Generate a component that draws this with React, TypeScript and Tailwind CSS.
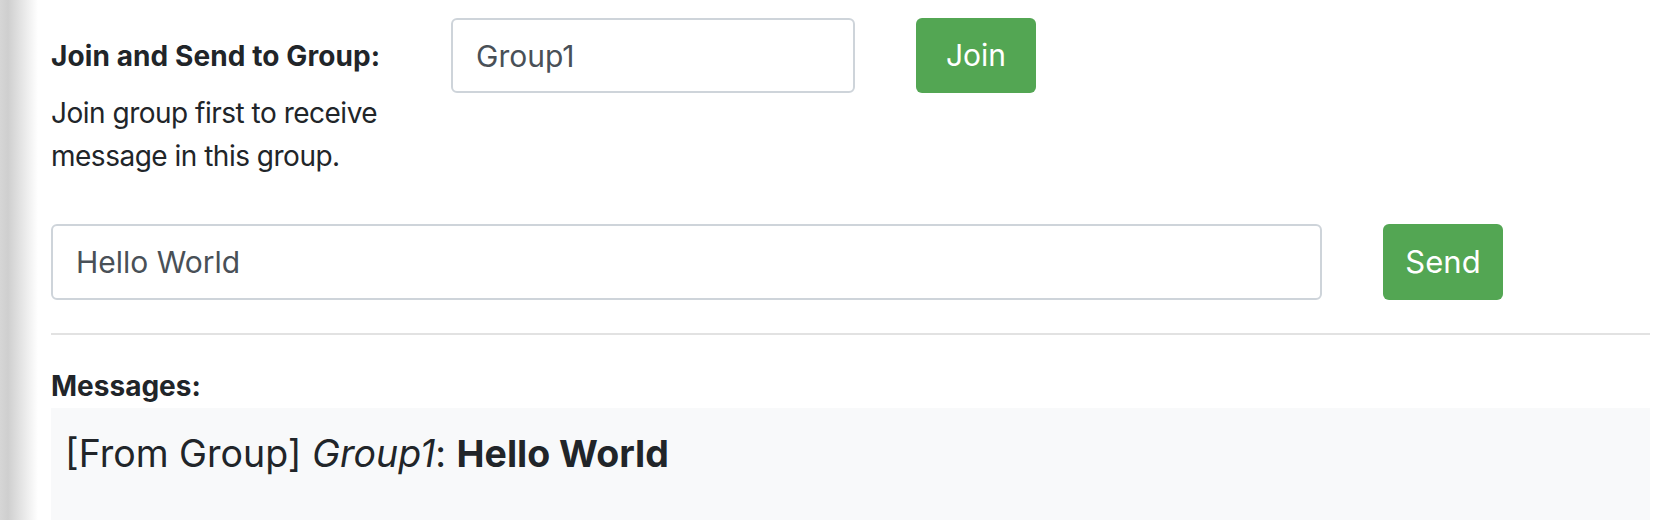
import React from "react";

const App = () => {
  return (
    <div className="min-h-[520px] w-full bg-white bg-[linear-gradient(to_right,#d6d6d6_0px,#cfcfcf_8px,#ffffff_38px)] font-['Inter','Liberation_Sans',sans-serif] text-[#212529]">
      <div className="pl-[51px] pr-[6px] pt-[18px]">
        {/* Join group row */}
        <div className="flex items-start">
          <div className="w-[400px] pr-[30px] pt-[17px]">
            <div className="text-[28px] font-bold leading-[43px] tracking-[0.1px]">Join and Send to Group:</div>
            <p className="mt-[14px] text-[28px] leading-[43px] tracking-[-0.5px]">
              Join group first to receive message in this group.
            </p>
          </div>
          <input
            type="text"
            defaultValue="Group1"
            className="h-[75px] w-[404px] rounded-[6px] border-2 border-[#ced4da] bg-white px-[23px] text-[30px] text-[#495057] outline-none"
          />
          <button
            type="button"
            className="ml-[61px] h-[75px] w-[120px] rounded-[6px] bg-[#53a653] text-[30px] text-white"
          >
            Join
          </button>
        </div>

        {/* Message row */}
        <div className="mt-[46px] flex items-start">
          <input
            type="text"
            defaultValue="Hello World"
            className="h-[76px] w-[1271px] rounded-[6px] border-2 border-[#ced4da] bg-white px-[23px] text-[30px] text-[#495057] outline-none"
          />
          <button
            type="button"
            className="ml-[61px] h-[76px] w-[120px] rounded-[6px] bg-[#53a653] text-[31px] text-white"
          >
            Send
          </button>
        </div>

        <div className="mt-[33px] h-[2px] bg-[#e2e2e2]" />

        <div className="mt-[30px] text-[28px] font-bold leading-[43px]">Messages:</div>
        <div className="min-h-[112px] bg-[#f8f9fa] pl-[14px] pt-[18px]">
          <div className="text-[37.5px] leading-[56px]">
            [From Group] <em>Group1</em>: <strong>Hello World</strong>
          </div>
        </div>
      </div>
    </div>
  );
};

export default App;
